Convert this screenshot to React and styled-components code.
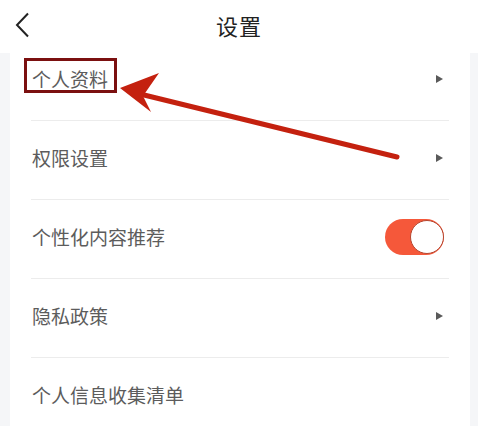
import styled, { createGlobalStyle } from 'styled-components';

const GlobalStyle = createGlobalStyle`
  html, body {
    margin: 0;
    padding: 0;
    background: #fff;
  }
  body {
    font-family: "Noto Sans CJK SC", "Noto Sans", sans-serif;
  }
`;

const Page = styled.div`
  position: relative;
  width: 478px;
  height: 426px;
  overflow: hidden;
  background: #f5f6f8;
`;

const Header = styled.header`
  height: 53px;
  background: #fff;
  display: flex;
  align-items: center;
  justify-content: center;
  position: relative;
`;

const BackButton = styled.button`
  position: absolute;
  left: 10px;
  top: 10px;
  width: 24px;
  height: 30px;
  padding: 0;
  border: none;
  background: none;
  display: flex;
  align-items: center;
  justify-content: center;
`;

const Title = styled.h1`
  margin: 0 0 4px;
  font-size: 22px;
  font-weight: 400;
  color: #222;
  letter-spacing: 1px;
`;

const Body = styled.main`
  height: 373px;
  overflow: hidden;
  padding: 0 8px 0 10px;
`;

const Card = styled.ul`
  list-style: none;
  margin: -11px 0 0;
  padding: 0 21px;
  background: #fff;
`;

const Row = styled.li`
  height: 78px;
  display: flex;
  align-items: center;
  justify-content: space-between;
  border-bottom: 1px solid #ececec;
  padding: 0 1px;
  &:last-child {
    border-bottom: none;
  }
`;

const Label = styled.span`
  font-size: 19px;
  color: #5c5c5c;
  margin-top: -6px;
`;

const Caret = styled.span`
  width: 0;
  height: 0;
  margin-right: 5px;
  margin-top: -4px;
  border-top: 4.5px solid transparent;
  border-bottom: 4.5px solid transparent;
  border-left: 7px solid #5a5a5a;
`;

const Toggle = styled.span`
  width: 59px;
  height: 36px;
  border-radius: 18px;
  background: ${p => (p.$on ? '#f5583a' : '#ddd')};
  display: flex;
  align-items: center;
  justify-content: ${p => (p.$on ? 'flex-end' : 'flex-start')};
  margin-right: 4px;
  margin-top: -4px;
`;

const Knob = styled.span`
  width: 34px;
  height: 34px;
  box-sizing: border-box;
  border-radius: 50%;
  background: #fff;
  border: 1px solid #b5452e;
`;

const Annotation = styled.svg`
  position: absolute;
  left: 0;
  top: 0;
  pointer-events: none;
`;

const items = [
  { label: '个人资料', kind: 'link' },
  { label: '权限设置', kind: 'link' },
  { label: '个性化内容推荐', kind: 'toggle', on: true },
  { label: '隐私政策', kind: 'link' },
  { label: '个人信息收集清单', kind: 'none' },
];

export default function App() {
  return (
    <Page>
      <GlobalStyle />
      <Header>
        <BackButton aria-label="返回">
          <svg width="18" height="26" viewBox="0 0 18 26">
            <path d="M15 1.5 L4 13 L15 24.5" fill="none" stroke="#222" strokeWidth="2" />
          </svg>
        </BackButton>
        <Title>设置</Title>
      </Header>
      <Body>
        <Card>
          {items.map(item => (
            <Row key={item.label}>
              <Label>{item.label}</Label>
              {item.kind === 'link' && <Caret />}
              {item.kind === 'toggle' && (
                <Toggle $on={item.on}>
                  <Knob />
                </Toggle>
              )}
            </Row>
          ))}
        </Card>
      </Body>
      <Annotation width="478" height="426" viewBox="0 0 478 426">
        <rect x="25.5" y="59.5" width="90" height="32" fill="none" stroke="#7b1010" strokeWidth="3" />
        <line x1="140" y1="94" x2="397" y2="157" stroke="#c4210f" strokeWidth="5" strokeLinecap="round" />
        <polygon points="120,88 159,73 143,96 151,112" fill="#c4210f" />
      </Annotation>
    </Page>
  );
}
